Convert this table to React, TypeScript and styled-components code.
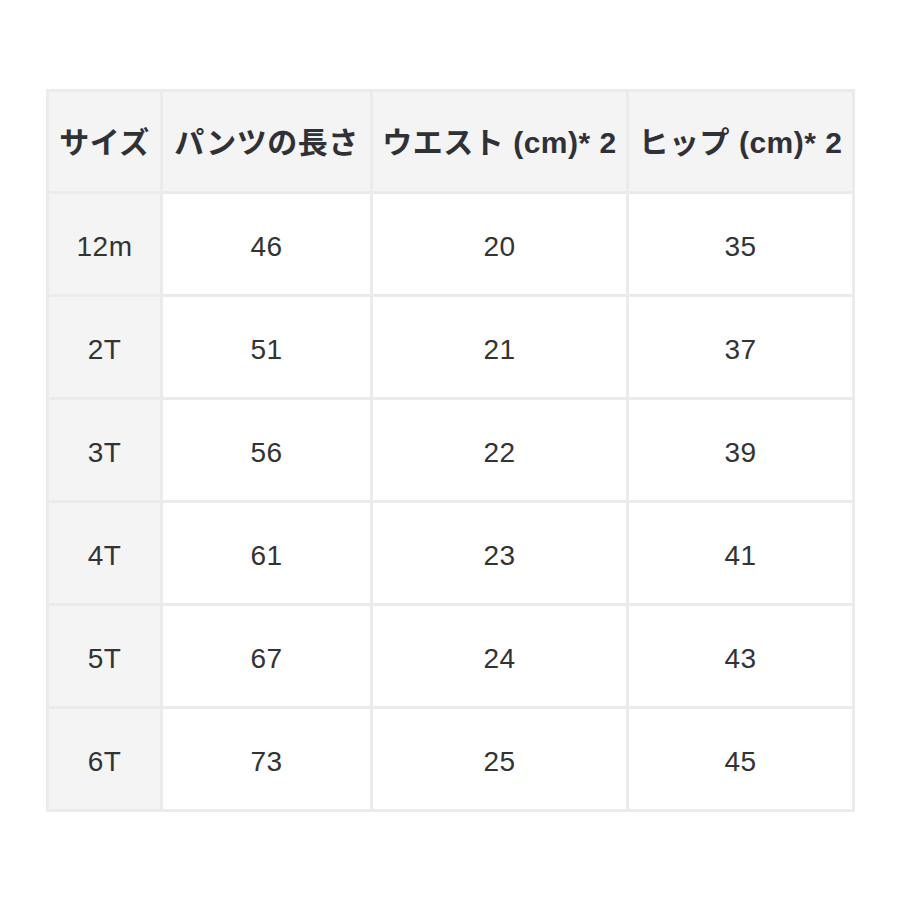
import React from 'react';
import styled, { createGlobalStyle } from 'styled-components';

const GlobalStyle = createGlobalStyle`
  html, body {
    margin: 0;
    padding: 0;
    background: #ffffff;
  }
  body {
    font-family: "Liberation Sans", "Noto Sans CJK JP", sans-serif;
  }
`;

const Page = styled.div`
  width: 920px;
  height: 920px;
  padding: 89px 0 0 46px;
  box-sizing: border-box;
`;

const SizeTable = styled.table`
  width: 806px;
  border-collapse: collapse;
  table-layout: fixed;
  border: 3px solid #ebebeb;
`;

const HeadRow = styled.tr`
  height: 102px;
  background: #f4f4f5;
`;

const BodyRow = styled.tr`
  height: 103px;
`;

const HeadCell = styled.th`
  border: 3px solid #ebebeb;
  padding: 0 0 4px;
  text-align: center;
  vertical-align: middle;
  font-size: 30px;
  font-weight: 700;
  letter-spacing: 0.5px;
  color: #2f3136;
  white-space: nowrap;
`;

const Cell = styled.td<{ $label?: boolean }>`
  border: 3px solid #ebebeb;
  padding: 5px 0 0;
  text-align: center;
  vertical-align: middle;
  font-size: 28px;
  letter-spacing: 0.5px;
  color: #333333;
  background: ${p => (p.$label ? '#f4f4f5' : '#ffffff')};
`;

const columns = [
  { title: 'サイズ', width: 114 },
  { title: 'パンツの長さ', width: 210 },
  { title: 'ウエスト (cm)* 2', width: 256 },
  { title: 'ヒップ (cm)* 2', width: 226 },
];

const rows = [
  ['12m', '46', '20', '35'],
  ['2T', '51', '21', '37'],
  ['3T', '56', '22', '39'],
  ['4T', '61', '23', '41'],
  ['5T', '67', '24', '43'],
  ['6T', '73', '25', '45'],
];

const App = () => {
  return (
    <Page>
      <GlobalStyle />
      <SizeTable>
        <colgroup>
          {columns.map(c => (
            <col key={c.title} style={{ width: c.width }} />
          ))}
        </colgroup>
        <thead>
          <HeadRow>
            {columns.map(c => (
              <HeadCell key={c.title}>{c.title}</HeadCell>
            ))}
          </HeadRow>
        </thead>
        <tbody>
          {rows.map(r => (
            <BodyRow key={r[0]}>
              {r.map((v, i) => (
                <Cell key={i} $label={i === 0}>
                  {v}
                </Cell>
              ))}
            </BodyRow>
          ))}
        </tbody>
      </SizeTable>
    </Page>
  );
};

export default App;
